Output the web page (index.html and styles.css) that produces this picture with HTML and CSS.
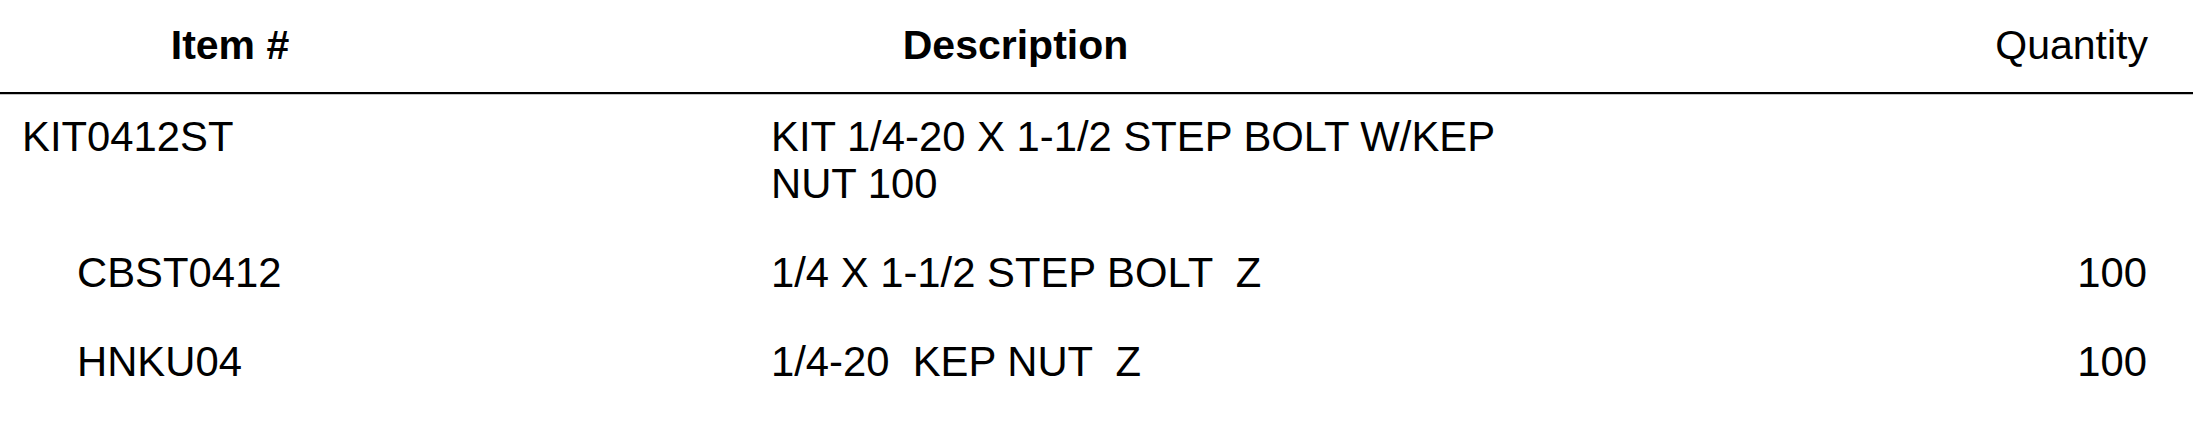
FILE: index.html
```html
<!DOCTYPE html>
<html lang="en">
<head>
<meta charset="utf-8">
<title>Kit components</title>
<link rel="stylesheet" href="styles.css">
</head>
<body>
<table class="kit-table">
  <colgroup>
    <col class="col-item">
    <col class="col-desc">
    <col class="col-qty">
  </colgroup>
  <thead>
    <tr>
      <th class="h-item">Item #</th>
      <th class="h-desc">Description</th>
      <th class="h-qty">Quantity</th>
    </tr>
  </thead>
  <tbody>
    <tr class="row-kit">
      <td class="c-item">KIT0412ST</td>
      <td class="c-desc">KIT 1/4-20 X 1-1/2 STEP BOLT W/KEP NUT 100</td>
      <td class="c-qty"></td>
    </tr>
    <tr class="row-part">
      <td class="c-item">CBST0412</td>
      <td class="c-desc">1/4 X 1-1/2 STEP BOLT  Z</td>
      <td class="c-qty">100</td>
    </tr>
    <tr class="row-part">
      <td class="c-item">HNKU04</td>
      <td class="c-desc">1/4-20  KEP NUT  Z</td>
      <td class="c-qty">100</td>
    </tr>
  </tbody>
</table>
</body>
</html>
```
FILE: styles.css
```css
html, body {
  margin: 0;
  padding: 0;
  background: #ffffff;
}

body {
  font-family: "Liberation Sans", Arial, sans-serif;
  font-size: 41px;
  line-height: 47px;
  color: #000000;
}

.kit-table {
  width: 100%;
  table-layout: fixed;
  border-collapse: separate;
  border-spacing: 0;
}

.col-item { width: 460px; }
.col-desc { width: 1111px; }

.kit-table th {
  padding: 22px 0 23px;
  border-bottom: 2px solid #000000;
  box-shadow: 0 1px 0 #c4c4c4;
  font-weight: bold;
  vertical-align: top;
}

.h-item,
.h-desc {
  text-align: center;
}

.kit-table .h-qty {
  font-weight: normal;
  text-align: right;
  padding-right: 45px;
}

.kit-table td {
  padding: 19px 0 23px;
  font-size: 41.8px;
  vertical-align: top;
  text-align: left;
}

.kit-table .c-item {
  padding-left: 22px;
}

.kit-table .row-part .c-item {
  padding-left: 77px;
}

.kit-table .c-desc {
  padding-left: 311px;
  white-space: pre-wrap;
}

.kit-table .c-qty {
  text-align: right;
  padding-right: 46px;
}
```
